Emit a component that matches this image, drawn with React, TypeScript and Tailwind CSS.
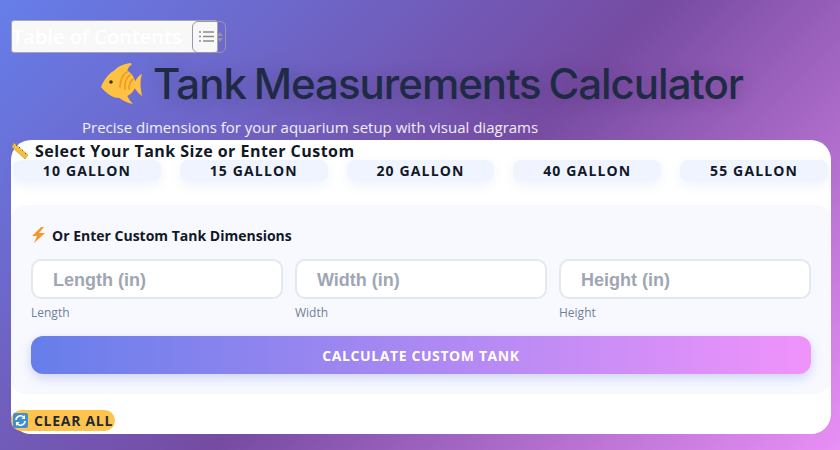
import React from "react";

const sizes = ["10 GALLON", "15 GALLON", "20 GALLON", "40 GALLON", "55 GALLON"];
const fields = [
	{ ph: "Length (in)", label: "Length" },
	{ ph: "Width (in)", label: "Width" },
	{ ph: "Height (in)", label: "Height" },
];

function FishIcon() {
	return (
		<svg width="44" height="44" viewBox="0 0 44 44" className="shrink-0">
			<path d="M30 1 C24 2 18 4 14 9 L27 13 C27 8 28 5 32 2Z" fill="#fdc244" />
			<path d="M18 35 C22 38 27 41 33 42 C30 39 28 36 27 33Z" fill="#fdc244" />
			<path d="M1 25 C5 15 12 7 21 7 C29 7 35 14 36 23 C34 31 27 36 19 36 C12 36 6 31 1 25Z" fill="#fdc244" />
			<path d="M34 22 C36 17 39 13 42 12 C40 18 40 24 42 34 C39 32 36 28 34 25Z" fill="#fdc244" />
			<circle cx="11" cy="20" r="1.8" fill="#3b3226" />
			<path d="M20 25 C20 18 23 12 27 10 M25 27 C24 21 27 15 30 13 M29 27 C29 23 31 19 33 17" fill="none" stroke="#f79a24" strokeWidth="1.8" strokeLinecap="round" />
		</svg>
	);
}

function RulerIcon() {
	return (
		<svg width="18" height="18" viewBox="0 0 18 18" className="shrink-0">
			<path d="M3 1 L17 13 L14 17 L1 5Z" fill="#f5bf3f" stroke="#c98f22" strokeWidth="0.6" />
			<path d="M5 4 L6 3 M8 6 L9 5 M11 9 L12 8 M14 12 L15 11" stroke="#7a5a1a" strokeWidth="1" />
		</svg>
	);
}

function BoltIcon() {
	return (
		<svg width="15" height="16" viewBox="0 0 15 16" className="shrink-0">
			<path d="M10 0 L1 9 L6 9 L3 16 L14 6 L8 6 L13 0Z" fill="#f7962d" />
		</svg>
	);
}

function RefreshIcon() {
	return (
		<svg width="15" height="15" viewBox="0 0 15 15" className="shrink-0">
			<rect width="15" height="15" rx="2" fill="#3f8fd6" />
			<path d="M3 7 A4.5 4.5 0 0 1 11 4.5 M12 8 A4.5 4.5 0 0 1 4 10.5" fill="none" stroke="#fff" strokeWidth="1.6" />
			<path d="M12 2 V6 H8.5 Z M3 13 V9 H6.5 Z" fill="#fff" />
		</svg>
	);
}

export default function App() {
	return (
		<div className="h-[450px] w-[840px] overflow-hidden bg-[linear-gradient(135deg,#667eea_0%,#764ba2_50%,#f093fb_100%)] bg-[length:840px_486px] pl-[11px] pt-[20px] font-['Open_Sans',sans-serif]">
			{/* TOC toggle, the button hangs out of the white box */}
			<div className="flex h-[33px] w-[207px] items-center rounded-[3px] border border-[#a9a5ad] bg-[#f8f8f8]">
				<span className="whitespace-nowrap text-[20px] font-semibold leading-none text-white">Table of Contents</span>
				<button className="ml-[10px] flex h-[32px] w-[34px] shrink-0 items-center rounded-[6px] border border-[#9d96a8] pl-[6px]">
					<svg width="15" height="13" viewBox="0 0 15 13">
						<path d="M0 2 H2 M4 2 H15 M0 6.5 H2 M4 6.5 H15 M0 11 H2 M4 11 H15" stroke="#8a8a8a" strokeWidth="1.6" />
					</svg>
					<svg width="6" height="10" viewBox="0 0 6 10" className="ml-[3px]">
						<path d="M3 0 L6 4 H0Z M3 10 L0 6 H6Z" fill="#9a93a6" />
					</svg>
				</button>
			</div>

			<div className="mt-[5px] flex h-[52px] items-center pl-[89px] [text-shadow:2px_2px_20px_rgba(0,0,0,0.2)]">
				<FishIcon />
				<h1 className="ml-[9px] whitespace-nowrap font-['Inter',sans-serif] text-[42px] font-medium leading-none tracking-[-1px] [word-spacing:-2.5px] text-[#1f2a44]">Tank Measurements Calculator</h1>
			</div>
			<p className="mt-[6px] pb-[1px] pl-[71px] text-[15px] leading-[22px] text-white/90">Precise dimensions for your aquarium setup with visual diagrams</p>

			<div className="mt-[1px] h-[294px] w-[820px] rounded-[20px] bg-white">
				<h2 className="flex h-[20px] items-center gap-[6px] whitespace-nowrap pt-[1px] text-[16px] font-bold tracking-[0.47px] text-[#111827]">
					<RulerIcon />
					Select Your Tank Size or Enter Custom
				</h2>
				<div className="grid grid-cols-5 gap-[19px] pl-[2px] pr-[3px]">
					{sizes.map((s) => (
						<button key={s} className="flex h-[21px] items-center justify-center rounded-[8px] bg-[#f0f4ff] text-[14px] font-bold tracking-[1.15px] text-[#111827] shadow-[0_4px_12px_rgba(102,126,234,0.1)]">
							{s}
						</button>
					))}
				</div>

				<div className="mt-[24px] h-[189px] rounded-[15px] bg-[#f8f9ff] px-[20px] pt-[20px]">
					<h3 className="flex h-[20px] items-center gap-[6px] text-[14px] font-bold text-[#111827]">
						<BoltIcon />
						Or Enter Custom Tank Dimensions
					</h3>
					<div className="mt-[14px] grid grid-cols-3 gap-[12px]">
						{fields.map((f) => (
							<div key={f.label}>
								<input
									placeholder={f.ph}
									className="h-[40px] w-full rounded-[10px] border-2 border-[#e2e8f0] bg-white pl-[20px] pt-[2px] font-['Liberation_Sans',sans-serif] text-[18px] font-bold outline-none placeholder:text-[#a0a6b3]"
								/>
								<div className="mt-[5px] text-[12px] leading-[17px] text-[#718096]">{f.label}</div>
							</div>
						))}
					</div>
					<button className="mt-[15px] flex h-[38px] w-full items-center justify-center rounded-[12px] bg-[linear-gradient(90deg,#667eea,#f093fb)] text-[14px] font-bold tracking-[0.6px] text-white shadow-[0_4px_12px_rgba(102,126,234,0.3)]">
						CALCULATE CUSTOM TANK
					</button>
				</div>

				<button className="mt-[16px] flex h-[21px] w-[104px] items-center gap-[6px] rounded-full bg-[#ffc44d] pl-[2px] text-[14px] font-bold tracking-[0.7px] text-[#1f2937]">
					<RefreshIcon />
					CLEAR ALL
				</button>
			</div>
		</div>
	);
}
